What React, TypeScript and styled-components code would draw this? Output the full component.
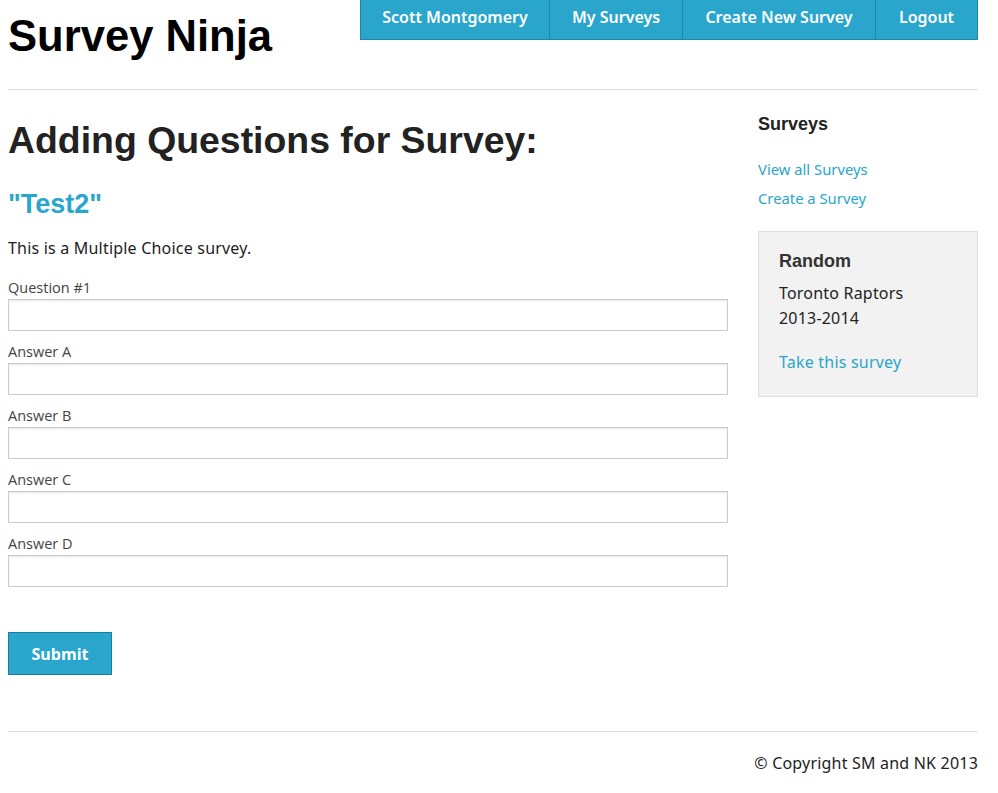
import React from "react";
import styled, { createGlobalStyle } from "styled-components";

const BLUE = "#2aa5cb";
const BODY_FONT = `"Noto Sans", "Lato", sans-serif`;
const HEAD_FONT = `"Liberation Sans", Arial, sans-serif`;

const GlobalStyle = createGlobalStyle`
  html, body {
    margin: 0;
    padding: 0;
    background: #fff;
  }
  body {
    font-family: ${BODY_FONT};
    color: #222;
  }
  * { box-sizing: border-box; }
`;

const Page = styled.div`
  width: 970px;
  margin: 0 8px;
`;

const Header = styled.header`
  display: flex;
  justify-content: space-between;
  align-items: flex-start;
  height: 90px;
  border-bottom: 1px solid #ddd;
`;

const Logo = styled.h1`
  margin: 10px 0 0;
  font-family: ${HEAD_FONT};
  font-weight: bold;
  font-size: 43.6px;
  line-height: 52px;
  color: #000;
`;

const Nav = styled.nav`
  display: flex;
  height: 40px;
  background: ${BLUE};
  border: 1px solid #1e86a6;
  border-top: none;
`;

const NavItem = styled.a<{ $width: number }>`
  display: flex;
  align-items: center;
  justify-content: center;
  padding-bottom: 6px;
  width: ${(p) => p.$width}px;
  color: #fff;
  font-family: ${BODY_FONT};
  font-weight: 600;
  font-size: 16px;
  text-decoration: none;
  & + & {
    border-left: 1px solid #1e86a6;
  }
`;

const Body = styled.div`
  display: flex;
  gap: 30px;
  padding-top: 22px;
`;

const Main = styled.main`
  width: 720px;
  padding-top: 6px;
`;

const Title = styled.h1`
  margin: 0;
  font-family: ${HEAD_FONT};
  font-size: 37.4px;
  line-height: 44px;
  color: #222;
`;

const SurveyName = styled.h2`
  margin: 26px 0 0;
  font-family: ${HEAD_FONT};
  font-size: 27px;
  line-height: 32px;
  color: ${BLUE};
`;

const Lead = styled.p`
  margin: 16px 0 0;
  font-size: 16px;
  letter-spacing: 0.2px;
  line-height: 24px;
`;

const Form = styled.form`
  margin-top: 18px;
`;

const Field = styled.div`
  margin-bottom: 11px;
`;

const Label = styled.label`
  display: block;
  font-family: "Open Sans", sans-serif;
  font-size: 14.5px;
  line-height: 20px;
  color: #444;
  margin-bottom: 1px;
`;

const Input = styled.input`
  display: block;
  width: 100%;
  height: 32px;
  border: 1px solid #ccc;
  box-shadow: inset 0 1px 2px rgba(0, 0, 0, 0.1);
  padding: 4px 8px;
  font-family: ${BODY_FONT};
  font-size: 15px;
`;

const Submit = styled.button`
  margin-top: 34px;
  width: 104px;
  height: 43px;
  background: ${BLUE};
  border: 1px solid #1a7e9e;
  color: #fff;
  font-family: "Open Sans", sans-serif;
  font-weight: bold;
  font-size: 16px;
`;

const Sidebar = styled.aside`
  width: 220px;
`;

const SideTitle = styled.h3`
  margin: 0;
  font-family: ${HEAD_FONT};
  font-size: 18px;
  line-height: 24px;
  color: #222;
`;

const LinkList = styled.ul`
  list-style: none;
  margin: 19px 0 0;
  padding: 0;
`;

const LinkItem = styled.li`
  font-size: 14.8px;
  line-height: 29px;
`;

const SideLink = styled.a`
  color: ${BLUE};
  text-decoration: none;
`;

const RandomBox = styled.div`
  margin-top: 18px;
  background: #f2f2f2;
  border: 1px solid #ddd;
  padding: 17px 20px 21px;
`;

const BoxTitle = styled.h4`
  margin: 0;
  font-family: ${HEAD_FONT};
  font-size: 18px;
  line-height: 24px;
  color: #333;
`;

const BoxText = styled.p`
  margin: 8px 0 0;
  font-size: 16px;
  letter-spacing: 0.2px;
  line-height: 25px;
  color: #222;
`;

const BoxLink = styled(SideLink)`
  display: block;
  margin-top: 19px;
  font-size: 16px;
  letter-spacing: 0.2px;
  line-height: 25px;
`;

const Footer = styled.footer`
  margin-top: 56px;
  border-top: 1px solid #ddd;
  padding-top: 19px;
  text-align: right;
  font-size: 16px;
  letter-spacing: 0.2px;
  line-height: 24px;
  color: #222;
`;

const navItems = [
  { label: "Scott Montgomery", width: 188 },
  { label: "My Surveys", width: 133 },
  { label: "Create New Survey", width: 193 },
  { label: "Logout", width: 102 },
];

const fields = ["Question #1", "Answer A", "Answer B", "Answer C", "Answer D"];

export default function App() {
  return (
    <>
      <GlobalStyle />
      <Page>
        <Header>
          <Logo>Survey Ninja</Logo>
          <Nav>
            {navItems.map((n) => (
              <NavItem key={n.label} href="#" $width={n.width}>
                {n.label}
              </NavItem>
            ))}
          </Nav>
        </Header>
        <Body>
          <Main>
            <Title>Adding Questions for Survey:</Title>
            <SurveyName>"Test2"</SurveyName>
            <Lead>This is a Multiple Choice survey.</Lead>
            <Form onSubmit={(e) => e.preventDefault()}>
              {fields.map((f) => (
                <Field key={f}>
                  <Label>{f}</Label>
                  <Input type="text" />
                </Field>
              ))}
              <Submit type="submit">Submit</Submit>
            </Form>
          </Main>
          <Sidebar>
            <SideTitle>Surveys</SideTitle>
            <LinkList>
              <LinkItem>
                <SideLink href="#">View all Surveys</SideLink>
              </LinkItem>
              <LinkItem>
                <SideLink href="#">Create a Survey</SideLink>
              </LinkItem>
            </LinkList>
            <RandomBox>
              <BoxTitle>Random</BoxTitle>
              <BoxText>
                Toronto Raptors
                <br />
                2013-2014
              </BoxText>
              <BoxLink href="#">Take this survey</BoxLink>
            </RandomBox>
          </Sidebar>
        </Body>
        <Footer>© Copyright SM and NK 2013</Footer>
      </Page>
    </>
  );
}
